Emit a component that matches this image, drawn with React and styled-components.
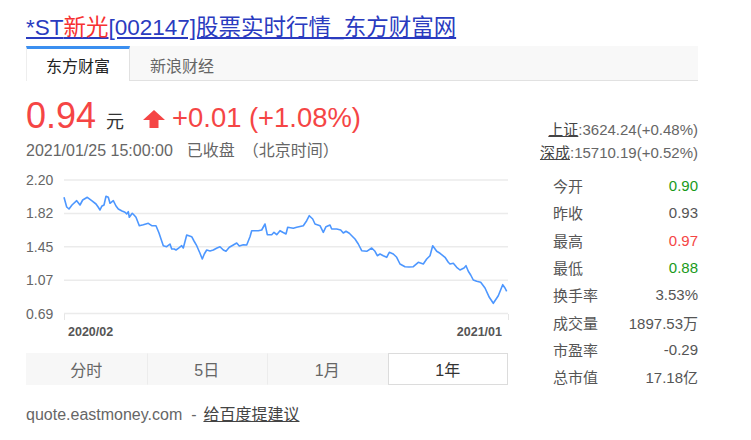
import styled, { createGlobalStyle } from 'styled-components'

const GlobalStyle = createGlobalStyle`
  body {
    margin: 0;
    background: #fff;
    font-family: Arial, "Liberation Sans", "Noto Sans CJK SC", sans-serif;
    color: #333;
  }
`

const Page = styled.div`
  padding: 14px 0 0 26px;
  width: 672px;
`

const Title = styled.a`
  display: block;
  font-size: 22.5px;
  line-height: 28px;
  color: #2a3bbf;
  text-decoration: underline;
  white-space: nowrap;

  em {
    font-style: normal;
    color: #f73131;
  }
`

const TabBar = styled.div`
  display: flex;
  margin-top: 4px;
  height: 35px;
  background: #f8f8f8;
  border-bottom: 1px solid #e1e1e1;
  box-sizing: border-box;
`

const Tab = styled.div`
  width: 104px;
  box-sizing: border-box;
  display: flex;
  align-items: center;
  justify-content: center;
  font-size: 16px;
  color: ${p => (p.active ? '#222' : '#666')};
  background: ${p => (p.active ? '#fff' : 'transparent')};
  border-top: 3px solid ${p => (p.active ? '#3b8ff0' : 'transparent')};
  border-left: ${p => (p.active ? '1px solid #eee' : 'none')};
  border-right: ${p => (p.active ? '1px solid #e1e1e1' : 'none')};
  margin-bottom: ${p => (p.active ? '-1px' : '0')};
`

const Body = styled.div`
  display: flex;
`

const Left = styled.div`
  width: 482px;
`

const Right = styled.div`
  flex: 1;
  padding-top: 37px;
`

const PriceRow = styled.div`
  display: flex;
  align-items: baseline;
  margin-top: 15px;
  height: 40px;
  line-height: 40px;
  color: #f54545;
`

const Price = styled.span`
  font-size: 36px;
`

const Unit = styled.span`
  font-size: 18px;
  color: #333;
  margin-left: 10px;
`

const Change = styled.span`
  display: flex;
  align-items: center;
  font-size: 27.4px;
  margin-left: 19px;

  svg {
    margin-right: 7px;
    align-self: center;
    margin-top: 2px;
  }
`

const DateLine = styled.div`
  margin-top: 5px;
  font-size: 16px;
  line-height: 20px;
  color: #666;
  white-space: nowrap;

  span {
    margin-left: 14px;
  }

  span + span {
    margin-left: 8px;
  }
`

const Chart = styled.svg`
  display: block;
  margin-top: 8px;
  font-family: Arial, "Liberation Sans", sans-serif;
`

const Periods = styled.div`
  display: grid;
  grid-template-columns: repeat(4, 1fr);
  margin-top: 9px;
  height: 32px;
  background: #f7f7f7;
`

const Period = styled.div`
  display: flex;
  align-items: center;
  justify-content: center;
  font-size: 16px;
  box-sizing: border-box;
  color: ${p => (p.active ? '#333' : '#666')};
  background: ${p => (p.active ? '#fff' : 'transparent')};
  border: 1px solid ${p => (p.active ? '#dcdcdc' : 'transparent')};
  border-left-color: ${p => (p.active ? '#dcdcdc' : p.first ? 'transparent' : '#ececec')};
`

const IndexLine = styled.div`
  text-align: right;
  font-size: 15px;
  line-height: 23px;
  color: #666;
  white-space: nowrap;

  u {
    color: #444;
  }
`

const Stats = styled.div`
  margin-top: 8px;
  padding-left: 45px;
  display: grid;
  grid-template-columns: 1fr auto;
  grid-auto-rows: 27.3px;
  align-items: center;
  font-size: 15px;
`

const Label = styled.div`
  color: #555;
`

const Value = styled.div`
  text-align: right;
  color: ${p => p.color || '#555'};
`

const Footer = styled.div`
  margin-top: 14px;
  font-size: 16px;
  line-height: 22px;
  color: #666;

  u {
    color: #444;
    margin-left: 7px;
  }
`

const UpArrow = () => (
  <svg width="22" height="18" viewBox="0 0 22 18">
    <path d="M11 0 L22 10 L15.5 10 L15.5 18 L6.5 18 L6.5 10 L0 10 Z" fill="#f54545" />
  </svg>
)

// page coordinates traced from the chart, shifted into the svg below
const trace = [
  [64, 198.3], [66.7, 208], [69, 210], [72, 206], [76.7, 201.7], [80, 206], [82.7, 201],
  [87.3, 198.3], [91.7, 201.7], [96, 205], [98.3, 208.3], [100, 211], [101.7, 207.3],
  [104, 206], [106, 197.3], [108.3, 198.3], [110, 204.3], [113.3, 201.7], [116, 207],
  [118.3, 210], [122, 212], [125, 213.3], [126.7, 215], [128.3, 212.7], [129.3, 218.3],
  [132.3, 214.3], [134, 216], [136, 218.3], [139.3, 226.7], [143.3, 225.7], [148.3, 224.3],
  [151.7, 226.7], [156, 226.7], [159, 234], [161, 240], [163.3, 246.7], [166.7, 247.7],
  [170, 245], [171.7, 250], [174.3, 250], [176, 251], [178.3, 249.3], [181.7, 246.7],
  [183.3, 249], [186.7, 236], [191.7, 237.7], [194, 242], [196.7, 246.7], [200, 254.3],
  [202.3, 260], [204.3, 255], [206.7, 251], [210, 252], [213.3, 251], [217, 249],
  [220, 247.7], [223.3, 251], [226, 252.3], [229.3, 248.3], [233.3, 246], [236.7, 244],
  [239.3, 247], [243.3, 245.7], [246.7, 246], [250, 237.7], [251.7, 231.7], [258.3, 231.7],
  [261.7, 231], [265, 225], [267.3, 235.7], [271.7, 235.7], [274, 233.3], [276.7, 235.7],
  [280, 231.7], [282.7, 233.3], [286, 235], [287.7, 228.3], [293.3, 229.3], [296.7, 228.3],
  [303.3, 226.7], [306.7, 221.7], [309.3, 216.7], [312.7, 220], [315, 225], [320, 226.7],
  [323.3, 233.3], [326, 227.7], [330, 226], [331.7, 230], [336.7, 230], [340.7, 231],
  [343.3, 234], [346, 232.3], [349.3, 234.3], [352, 237], [355, 240], [358.3, 245],
  [361.7, 251.7], [366.7, 252.3], [371.7, 249], [375, 252.3], [377.3, 256.7], [380, 255],
  [383.3, 256.7], [386.7, 258.3], [389.3, 253.3], [393.3, 255], [396.7, 258.3], [400, 265],
  [405, 267.7], [409, 268], [413.3, 267.7], [418.3, 263.3], [423.3, 265], [426.7, 260],
  [430, 256.7], [432.7, 246.7], [436.7, 252.3], [440, 254.3], [445, 258.3], [448.3, 263.3],
  [450, 265], [453.3, 264.3], [456.7, 268.3], [460, 271], [464, 269], [466, 266.7],
  [468.3, 272.3], [470.7, 276], [473.3, 281], [476.7, 282.3], [480.7, 283.3], [485, 289],
  [489.3, 298.3], [493.3, 304.3], [498.3, 296.7], [502.7, 285.7], [505, 289], [506.7, 292.3],
]

const linePoints = trace.map(([x, y]) => `${(x - 26).toFixed(1)},${(y - 170).toFixed(1)}`).join(' ')

const yTicks = ['2.20', '1.82', '1.45', '1.07', '0.69']

const PriceChart = () => (
  <Chart width="484" height="175" viewBox="0 0 484 175">
    {yTicks.map((t, i) => {
      const y = 11 + i * 33.4
      return (
        <g key={t}>
          <line x1="38" x2="482" y1={y} y2={y} stroke="#ebebeb" strokeWidth="1.5" />
          <text x="0" y={y + 5} fontSize="14" fill="#666">{t}</text>
        </g>
      )
    })}
    <line x1="38.5" x2="38.5" y1="145" y2="151" stroke="#e6e6e6" />
    <line x1="482.5" x2="482.5" y1="145" y2="151" stroke="#e6e6e6" />
    <polyline points={linePoints} fill="none" stroke="#4d97ff" strokeWidth="1.6" strokeLinejoin="round" />
    <text x="42" y="167" fontSize="12.5" fontWeight="bold" fill="#555">2020/02</text>
    <text x="476" y="167" fontSize="12.5" fontWeight="bold" fill="#555" textAnchor="end">2021/01</text>
  </Chart>
)

const stats = [
  ['今开', '0.90', '#1a9a1a'],
  ['昨收', '0.93'],
  ['最高', '0.97', '#f54545'],
  ['最低', '0.88', '#1a9a1a'],
  ['换手率', '3.53%'],
  ['成交量', '1897.53万'],
  ['市盈率', '-0.29'],
  ['总市值', '17.18亿'],
]

const periods = ['分时', '5日', '1月', '1年']

export default function App() {
  return (
    <>
      <GlobalStyle />
      <Page>
        <Title href="#">*ST<em>新光</em>[002147]股票实时行情_东方财富网</Title>
        <TabBar>
          <Tab active>东方财富</Tab>
          <Tab>新浪财经</Tab>
        </TabBar>
        <Body>
          <Left>
            <PriceRow>
              <Price>0.94</Price>
              <Unit>元</Unit>
              <Change>
                <UpArrow />
                +0.01 (+1.08%)
              </Change>
            </PriceRow>
            <DateLine>
              2021/01/25 15:00:00<span>已收盘</span><span>（北京时间）</span>
            </DateLine>
            <PriceChart />
            <Periods>
              {periods.map((p, i) => (
                <Period key={p} first={i === 0} active={i === 3}>{p}</Period>
              ))}
            </Periods>
          </Left>
          <Right>
            <IndexLine><u>上证</u>:3624.24(+0.48%)</IndexLine>
            <IndexLine><u>深成</u>:15710.19(+0.52%)</IndexLine>
            <Stats>
              {stats.map(([label, value, color]) => [
                <Label key={label}>{label}</Label>,
                <Value key={label + 'v'} color={color}>{value}</Value>,
              ])}
            </Stats>
          </Right>
        </Body>
        <Footer>
          quote.eastmoney.com &nbsp;-<u>给百度提建议</u>
        </Footer>
      </Page>
    </>
  )
}
